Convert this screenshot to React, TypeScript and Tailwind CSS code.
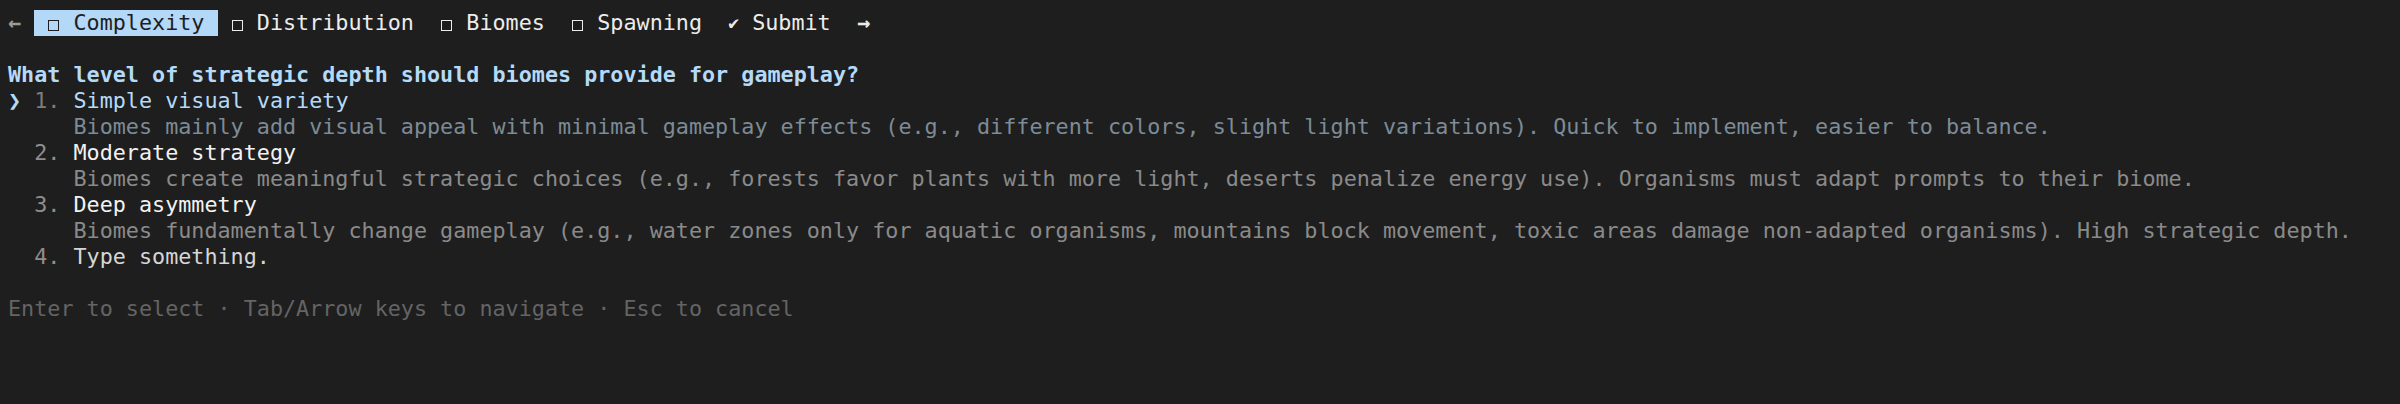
import React from 'react'

const tabs = [
  { label: 'Complexity', done: false, active: true },
  { label: 'Distribution', done: false, active: false },
  { label: 'Biomes', done: false, active: false },
  { label: 'Spawning', done: false, active: false },
  { label: 'Submit', done: true, active: false },
]

const options = [
  {
    title: 'Simple visual variety',
    desc: 'Biomes mainly add visual appeal with minimal gameplay effects (e.g., different colors, slight light variations). Quick to implement, easier to balance.',
  },
  {
    title: 'Moderate strategy',
    desc: 'Biomes create meaningful strategic choices (e.g., forests favor plants with more light, deserts penalize energy use). Organisms must adapt prompts to their biome.',
  },
  {
    title: 'Deep asymmetry',
    desc: 'Biomes fundamentally change gameplay (e.g., water zones only for aquatic organisms, mountains block movement, toxic areas damage non-adapted organisms). High strategic depth.',
  },
]

// one terminal cell, keeps the grid even if the glyph comes from a fallback font
function Cell({ children, className = '' }: { children?: React.ReactNode; className?: string }) {
  return <span className={`inline-block w-[1ch] text-center overflow-visible ${className}`}>{children}</span>
}

function CheckBox({ dark }: { dark: boolean }) {
  return (
    <span className="inline-flex w-[1ch] h-[26px] items-end justify-center pb-[5px] align-top">
      <span className={`block w-[11px] h-[11px] border-[1.5px] ${dark ? 'border-[#1e1e1e]' : 'border-[#ececec]'}`} />
    </span>
  )
}

function Line({ children, className = '' }: { children?: React.ReactNode; className?: string }) {
  return <div className={`h-[26px] leading-[26px] whitespace-pre ${className}`}>{children}</div>
}

export default function App() {
  return (
    <div
      className="w-[2400px] h-[404px] bg-[#1e1e1e] text-[21.75px] pt-[10px] pl-[8px] overflow-hidden"
      style={{ fontFamily: '"DejaVu Sans Mono", "Liberation Mono", monospace' }}
    >
      {/* tab bar */}
      <Line className="flex">
        <Cell className="text-[#9a9a9a] font-bold">←</Cell>
        <Cell />
        {tabs.map((t) => (
          <span
            key={t.label}
            className={`inline-flex h-[26px] ${t.active ? 'bg-[#b3d8f8] text-[#1e1e1e]' : 'text-[#ececec]'}`}
          >
            <Cell />
            {t.done ? <Cell className="text-[18px]">✔</Cell> : <CheckBox dark={t.active} />}
            <Cell />
            <span>{t.label}</span>
            <Cell />
          </span>
        ))}
        <Cell />
        <Cell className="text-[#ececec] font-bold">→</Cell>
      </Line>

      <Line />

      <Line className="font-bold text-[#b5daf8]">What level of strategic depth should biomes provide for gameplay?</Line>

      {options.map((o, i) => {
        const selected = i === 0
        return (
          <React.Fragment key={o.title}>
            <Line>
              <Cell className="text-[#b5daf8] font-bold">{selected ? '❯' : ' '}</Cell>
              <span className={selected ? 'text-[#7c7c7c]' : 'text-[#8e8e8e]'}>{` ${i + 1}. `}</span>
              <span className={selected ? 'text-[#b5daf8]' : 'text-[#f2f2f2]'}>{o.title}</span>
            </Line>
            <Line className={selected ? 'text-[#7d8b97]' : 'text-[#8a8a8a]'}>{`     ${o.desc}`}</Line>
          </React.Fragment>
        )
      })}

      <Line>
        <span className="text-[#8e8e8e]">{'  4. '}</span>
        <span className="text-[#d6d6d6]">Type something.</span>
      </Line>

      <Line />

      <Line className="text-[#646464]">Enter to select · Tab/Arrow keys to navigate · Esc to cancel</Line>
    </div>
  )
}
